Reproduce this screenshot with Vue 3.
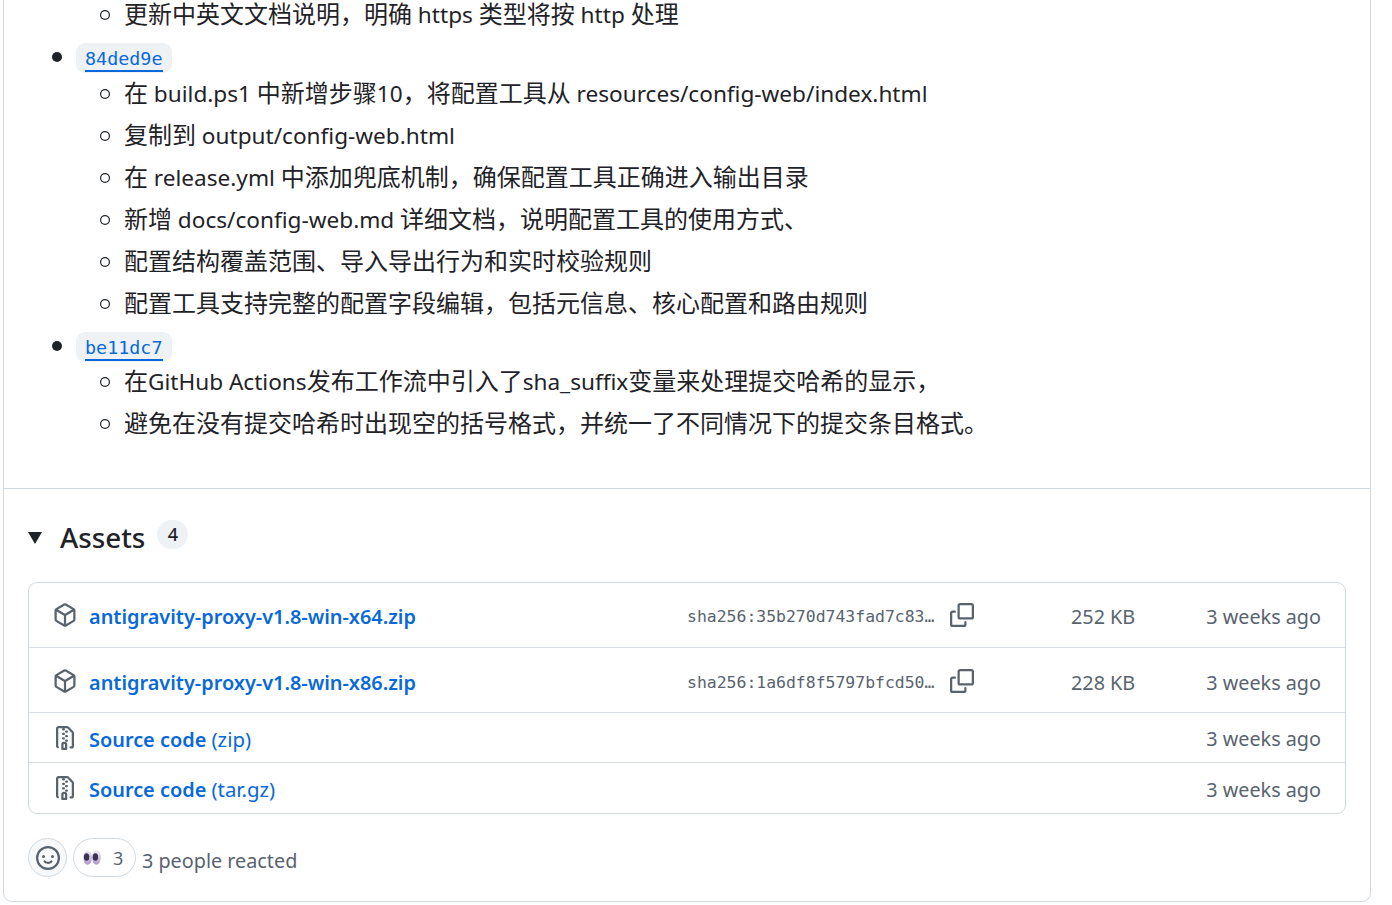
<script setup>
const groups = [
  { lines: ['更新中英文文档说明，明确 https 类型将按 http 处理'] },
  {
    hash: '84ded9e',
    lines: [
      '在 build.ps1 中新增步骤10，将配置工具从 resources/config-web/index.html',
      '复制到 output/config-web.html',
      '在 release.yml 中添加兜底机制，确保配置工具正确进入输出目录',
      '新增 docs/config-web.md 详细文档，说明配置工具的使用方式、',
      '配置结构覆盖范围、导入导出行为和实时校验规则',
      '配置工具支持完整的配置字段编辑，包括元信息、核心配置和路由规则',
    ],
  },
  {
    hash: 'be11dc7',
    lines: [
      '在GitHub Actions发布工作流中引入了sha_suffix变量来处理提交哈希的显示，',
      '避免在没有提交哈希时出现空的括号格式，并统一了不同情况下的提交条目格式。',
    ],
  },
]
const binaries = [
  { name: 'antigravity-proxy-v1.8-win-x64.zip', sha: 'sha256:35b270d743fad7c83…', size: '252 KB' },
  { name: 'antigravity-proxy-v1.8-win-x86.zip', sha: 'sha256:1a6df8f5797bfcd50…', size: '228 KB' },
]
const sources = ['(zip)', '(tar.gz)']
// Latin runs are set slightly smaller than CJK runs in the release notes.
const runs = (text) => text.match(/[\x20-\x7e]+|[^\x20-\x7e]+/g).map((t) => ({ t, latin: /^[\x20-\x7e]/.test(t) }))
</script>

<template>
  <div class="page">
    <section class="card">
      <div class="notes">
        <ul class="outer">
          <li v-for="(g, i) in groups" :key="i" :class="{ bare: !g.hash }">
            <a v-if="g.hash" class="hash" href="#"><span>{{ g.hash }}</span></a>
            <ul class="inner">
              <li v-for="l in g.lines" :key="l"><span v-for="(r, k) in runs(l)" :key="k" :class="{ latin: r.latin }">{{ r.t }}</span></li>
            </ul>
          </li>
        </ul>
      </div>

      <div class="assets">
        <div class="head">
          <span class="caret"></span>
          <h2>Assets</h2>
          <span class="count">4</span>
        </div>

        <div class="box">
          <div v-for="b in binaries" :key="b.name" class="row tall">
            <svg class="ico" viewBox="0 0 16 16"><path d="m8.878.392 5.25 3.045c.54.314.872.89.872 1.514v6.098a1.75 1.75 0 0 1-.872 1.514l-5.25 3.045a1.75 1.75 0 0 1-1.756 0l-5.25-3.045A1.75 1.75 0 0 1 1 11.049V4.951c0-.624.332-1.201.872-1.514L7.122.392a1.75 1.75 0 0 1 1.756 0ZM7.875 1.69l-4.63 2.685L8 7.133l4.755-2.758-4.63-2.685a.248.248 0 0 0-.25 0ZM2.5 5.677v5.372c0 .09.047.171.125.216l4.625 2.683V8.432Zm6.25 8.271 4.625-2.683a.25.25 0 0 0 .125-.216V5.677L8.75 8.432Z"/></svg>
            <a class="name" href="#">{{ b.name }}</a>
            <span class="sha">{{ b.sha }}</span>
            <svg class="copy" viewBox="0 0 16 16"><path d="M0 6.75C0 5.784.784 5 1.75 5h1.5a.75.75 0 0 1 0 1.5h-1.5a.25.25 0 0 0-.25.25v7.5c0 .138.112.25.25.25h7.5a.25.25 0 0 0 .25-.25v-1.5a.75.75 0 0 1 1.5 0v1.5A1.75 1.75 0 0 1 9.25 16h-7.5A1.75 1.75 0 0 1 0 14.25Z"/><path d="M5 1.75C5 .784 5.784 0 6.75 0h7.5C15.216 0 16 .784 16 1.75v7.5A1.75 1.75 0 0 1 14.25 11h-7.5A1.75 1.75 0 0 1 5 9.25Zm1.75-.25a.25.25 0 0 0-.25.25v7.5c0 .138.112.25.25.25h7.5a.25.25 0 0 0 .25-.25v-7.5a.25.25 0 0 0-.25-.25Z"/></svg>
            <span class="size">{{ b.size }}</span>
            <span class="when">3 weeks ago</span>
          </div>
          <div v-for="s in sources" :key="s" class="row short">
            <svg class="ico" viewBox="0 0 16 16"><path d="M3.5 1.75v11.5c0 .09.048.173.126.217a.75.75 0 0 1-.752 1.298A1.748 1.748 0 0 1 2 13.25V1.75C2 .784 2.784 0 3.75 0h5.586c.464 0 .909.185 1.237.513l2.914 2.914c.329.328.513.773.513 1.237v8.586A1.75 1.75 0 0 1 12.25 15h-.5a.75.75 0 0 1 0-1.5h.5a.25.25 0 0 0 .25-.25V4.664a.25.25 0 0 0-.073-.177L9.513 1.573a.25.25 0 0 0-.177-.073H7.25a.75.75 0 0 1 0 1.5h-.5a.75.75 0 0 1 0-1.5h-3a.25.25 0 0 0-.25.25Zm3.75 8.75h.5c.966 0 1.75.784 1.75 1.75v3a.75.75 0 0 1-.75.75h-2.5a.75.75 0 0 1-.75-.75v-3c0-.966.784-1.75 1.75-1.75ZM6 5.25a.75.75 0 0 1 .75-.75h.5a.75.75 0 0 1 0 1.5h-.5A.75.75 0 0 1 6 5.25Zm.75 2.25h.5a.75.75 0 0 1 0 1.5h-.5a.75.75 0 0 1 0-1.5ZM8 6.75A.75.75 0 0 1 8.75 6h.5a.75.75 0 0 1 0 1.5h-.5A.75.75 0 0 1 8 6.75ZM8.75 3h.5a.75.75 0 0 1 0 1.5h-.5a.75.75 0 0 1 0-1.5ZM8 9.75A.75.75 0 0 1 8.75 9h.5a.75.75 0 0 1 0 1.5h-.5A.75.75 0 0 1 8 9.75Zm-1 2.5v2.25h1v-2.25a.25.25 0 0 0-.25-.25h-.5a.25.25 0 0 0-.25.25Z"/></svg>
            <a class="name" href="#">Source code <span class="ext">{{ s }}</span></a>
            <span class="when">3 weeks ago</span>
          </div>
        </div>

        <div class="reactions">
          <button class="smile">
            <svg viewBox="0 0 16 16"><path d="M8 0a8 8 0 1 1 0 16A8 8 0 0 1 8 0ZM1.5 8a6.5 6.5 0 1 0 13 0 6.5 6.5 0 0 0-13 0Zm3.82 1.636a.75.75 0 0 1 1.038.175l.007.009c.103.118.22.222.35.31.264.178.683.37 1.285.37.602 0 1.02-.192 1.285-.371.13-.088.247-.192.35-.31l.007-.008a.75.75 0 0 1 1.222.87l-.022-.015c.02.013.021.015.021.015v.001l-.001.002-.002.003-.005.007-.014.019a2.066 2.066 0 0 1-.184.213c-.16.166-.338.316-.53.445-.63.418-1.37.638-2.127.629-.946 0-1.652-.308-2.126-.63a3.331 3.331 0 0 1-.715-.657l-.014-.02-.005-.006-.002-.003v-.002h-.001l.613-.432-.614.43a.75.75 0 0 1 .183-1.044ZM12 7a1 1 0 1 1-2 0 1 1 0 0 1 2 0ZM5 8a1 1 0 1 1 0-2 1 1 0 0 1 0 2Zm5.25 2.25.592.416a97.71 97.71 0 0 0-.592-.416Z"/></svg>
          </button>
          <button class="pill">
            <svg class="eyes" viewBox="0 0 18 15">
              <defs>
                <linearGradient id="eyeFill" x1="0" y1="0" x2="0" y2="1">
                  <stop offset="0" stop-color="#f1edf5"/>
                  <stop offset="1" stop-color="#b294cc"/>
                </linearGradient>
              </defs>
              <ellipse cx="4.6" cy="7.5" rx="4.4" ry="7.3" fill="url(#eyeFill)"/>
              <ellipse cx="13.4" cy="7.5" rx="4.4" ry="7.3" fill="url(#eyeFill)"/>
              <ellipse cx="3.6" cy="7" rx="2.7" ry="3.8" fill="#3a3350"/>
              <ellipse cx="12.4" cy="7" rx="2.7" ry="3.8" fill="#3a3350"/>
            </svg>
            <span>3</span>
          </button>
          <span class="people">3 people reacted</span>
        </div>
      </div>
    </section>
  </div>
</template>

<style>
html, body { margin: 0; background: #fff; overflow: hidden; }
</style>

<style scoped>
.page {
  width: 1392px;
  height: 905px;
  overflow: hidden;
  padding: 0 21px 0 3px;
  box-sizing: border-box;
  font-family: "Noto Sans", "Noto Sans CJK SC", sans-serif;
  color: #1f2328;
}
.card {
  margin-top: -17px;
  border: 1px solid #d1d9e0;
  border-radius: 9px;
  background: #fff;
}
.notes { padding: 6px 24px 0; }
ul { margin: 0; padding: 0; list-style: none; }
.outer { padding-left: 48px; font-size: 24px; line-height: 36px; }
.outer > li { position: relative; margin-top: 6px; }
.outer > li:not(.bare)::before {
  content: "";
  position: absolute;
  left: -24px;
  top: 9px;
  width: 10px;
  height: 10px;
  border-radius: 50%;
  background: #1f2328;
}
.latin { font-size: 22.6px; }
.hash {
  display: flex;
  width: fit-content;
  height: 30px;
  margin: 11px 0 1.5px;
  padding: 0 9px;
  border-radius: 9px;
  background: #eff2f5;
  font-family: "DejaVu Sans Mono", monospace;
  font-size: 18.4px;
  color: #0969da;
  text-decoration: none;
}
.hash span {
  display: block;
  height: 27px;
  line-height: 32px;
  border-bottom: 2px solid #0969da;
}
.inner { padding-left: 48px; }
.inner li { position: relative; height: 36px; margin-top: 6px; }
.inner li:first-child { margin-top: 0; }
.inner li::before {
  content: "";
  position: absolute;
  left: -24px;
  top: 14px;
  width: 10px;
  height: 10px;
  box-shadow: inset 0 0 0 1.2px #1f2328;
  border-radius: 50%;
}
.assets {
  margin-top: 47px;
  border-top: 1px solid #d1d9e0;
  padding: 0 24px 24px;
}
.head {
  display: flex;
  align-items: center;
  height: 93px;
}
.caret {
  width: 0;
  height: 0;
  border-left: 7px solid transparent;
  border-right: 7px solid transparent;
  border-top: 12px solid #1f2328;
  margin-top: 5px;
}
h2 {
  margin: 2px 0 0 18px;
  font-size: 27.8px;
  line-height: 36px;
  font-weight: 500;
}
.count {
  margin-left: 12px;
  width: 31px;
  height: 29px;
  border-radius: 15px;
  background: #eff2f5;
  text-align: center;
  font-size: 18px;
  line-height: 29px;
  font-weight: 500;
  margin-top: -3px;
}
.box {
  border: 1px solid #d1d9e0;
  border-radius: 9px;
}
.row {
  display: flex;
  align-items: center;
  padding: 0 24px;
  font-size: 19.8px;
  box-sizing: border-box;
}
.row + .row { border-top: 1px solid #d8dee4; }
.tall { height: 65px; }
.tall:first-child { height: 64px; }
.tall:nth-child(2) { padding-top: 2px; }
.short { height: 50px; }
.short:last-child { height: 51px; }
.ico { width: 24px; height: 24px; fill: #59636e; flex: none; margin-right: 12px; }
.name { color: #0969da; text-decoration: none; font-weight: 600; flex: 1 1 auto; font-size: 19.9px; }
.tall .name { padding-top: 3px; }
.short .name { padding-top: 2px; }
.ext { font-weight: 400; font-size: 20.4px; }
.sha {
  width: 248px;
  padding-top: 2px;
  font-family: "DejaVu Sans Mono", monospace;
  font-size: 16.45px;
  color: #59636e;
  white-space: nowrap;
}
.copy { width: 24px; height: 24px; fill: #59636e; margin-left: 15px; flex: none; }
.size { width: 64px; margin-left: 97px; color: #59636e; flex: none; white-space: nowrap; padding-top: 3px; }
.when { width: 115px; margin-left: 71px; text-align: right; color: #59636e; flex: none; white-space: nowrap; padding-top: 3px; }
.short .when { margin-left: 0; padding-top: 2px; }
.reactions {
  display: flex;
  align-items: center;
  gap: 6px;
  margin-top: 24px;
  height: 39px;
}
.smile, .pill {
  padding: 0;
  display: flex;
  align-items: center;
  justify-content: center;
  height: 39px;
  border: 1px solid #d1d9e0;
  border-radius: 20px;
  font-family: inherit;
}
.smile { width: 39px; background: #f6f8fa; }
.smile svg { width: 24px; height: 24px; fill: #59636e; }
.pill { width: 63px; background: #fff; gap: 12px; color: #59636e; font-size: 18px; justify-content: flex-start; padding-left: 9px; }
.eyes { width: 18px; height: 15px; }
.people { color: #59636e; font-size: 19.8px; margin-top: 5px; }
</style>
